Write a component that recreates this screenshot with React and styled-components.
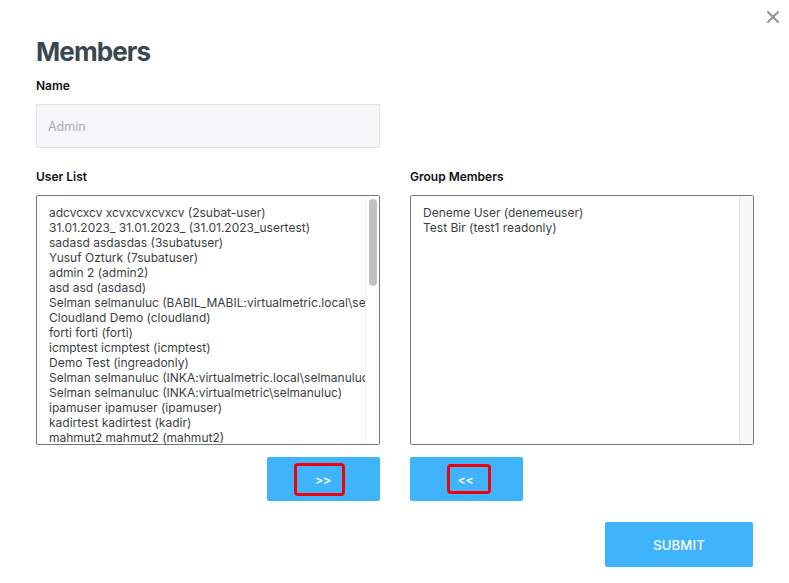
import React from 'react';
import styled, { createGlobalStyle } from 'styled-components';

const GlobalStyle = createGlobalStyle`
  html, body {
    margin: 0;
    padding: 0;
    background: #fff;
    font-family: Inter, "Noto Sans", sans-serif;
  }
`;

const Modal = styled.div`
  position: relative;
  width: 789px;
  height: 583px;
  box-sizing: border-box;
  padding: 35px 36px 0 36px;
  background: #fff;
`;

const CloseButton = styled.button`
  position: absolute;
  top: 10px;
  right: 9px;
  width: 14px;
  height: 14px;
  padding: 0;
  border: none;
  background: none;
  cursor: pointer;
  display: flex;
`;

const Title = styled.h1`
  margin: 0;
  font-size: 26px;
  font-weight: 700;
  letter-spacing: -0.9px;
  color: #3a4750;
  line-height: 34px;
`;

const Label = styled.label`
  display: block;
  font-size: 12px;
  font-weight: 600;
  color: #111;
  line-height: 15px;
  margin: ${p => p.$top || 0}px 0 11px;
`;

const NameInput = styled.input`
  width: 344px;
  height: 44px;
  box-sizing: border-box;
  border: 1px solid #dfe3e7;
  border-radius: 2px;
  background: #f5f7f9;
  padding: 0 11px;
  font-family: inherit;
  font-size: 12.5px;
  color: #aaa;
  outline: none;
  &::placeholder {
    color: #a9adb1;
  }
`;

const Columns = styled.div`
  display: grid;
  grid-template-columns: 344px 344px;
  column-gap: 30px;
  margin-top: 21px;
`;

const Column = styled.div`
  display: flex;
  flex-direction: column;
`;

const ListBox = styled.div`
  display: flex;
  height: 250px;
  box-sizing: border-box;
  border: 1px solid #777;
  border-radius: 2px;
  overflow: hidden;
`;

const ListItems = styled.ul`
  flex: 1;
  min-width: 0;
  margin: 0;
  padding: 9px 0 0 12px;
  list-style: none;
`;

const ListItem = styled.li`
  font-size: 12px;
  line-height: 15px;
  color: #3b3f42;
  white-space: nowrap;
  overflow: hidden;
`;

const ScrollTrack = styled.div`
  width: 14px;
  flex: 0 0 14px;
  background: ${p => (p.$empty ? '#f7f7f7' : '#fff')};
  border-left: 1px solid ${p => (p.$empty ? '#e6e6e6' : '#f0f0f0')};
  padding: 3px 0 0 3px;
  box-sizing: border-box;
`;

const ScrollThumb = styled.div`
  width: 8px;
  height: 87px;
  border-radius: 4px;
  background: #c1c1c1;
`;

const ButtonRow = styled.div`
  display: flex;
  justify-content: ${p => p.$align};
  margin-top: 12px;
`;

const MoveButton = styled.button`
  width: 113px;
  height: 44px;
  border: none;
  border-radius: 2px;
  background: #3fb4fd;
  display: flex;
  align-items: center;
  justify-content: center;
  padding: 0;
  cursor: pointer;
  font-family: inherit;
`;

const Highlight = styled.span`
  display: flex;
  align-items: center;
  justify-content: center;
  width: ${p => p.$w}px;
  height: ${p => p.$h}px;
  box-sizing: border-box;
  border: 3px solid #f3000a;
  border-radius: 4px;
  color: #fff;
  font-size: 12px;
  font-weight: 600;
  margin: ${p => p.$offset};
  padding: ${p => p.$pad};
`;

const Footer = styled.div`
  display: flex;
  justify-content: flex-end;
  margin-top: 21px;
`;

const SubmitButton = styled.button`
  width: 148px;
  height: 45px;
  border: none;
  border-radius: 2px;
  background: #3fb4fd;
  color: #fff;
  font-family: inherit;
  font-size: 13px;
  font-weight: 500;
  letter-spacing: 0.2px;
  cursor: pointer;
`;

const users = [
  'adcvcxcv xcvxcvxcvxcv (2subat-user)',
  '31.01.2023_ 31.01.2023_ (31.01.2023_usertest)',
  'sadasd asdasdas (3subatuser)',
  'Yusuf Ozturk (7subatuser)',
  'admin 2 (admin2)',
  'asd asd (asdasd)',
  'Selman selmanuluc (BABIL_MABIL:virtualmetric.local\\selmanuluc)',
  'Cloudland Demo (cloudland)',
  'forti forti (forti)',
  'icmptest icmptest (icmptest)',
  'Demo Test (ingreadonly)',
  'Selman selmanuluc (INKA:virtualmetric.local\\selmanuluc)',
  'Selman selmanuluc (INKA:virtualmetric\\selmanuluc)',
  'ipamuser ipamuser (ipamuser)',
  'kadirtest kadirtest (kadir)',
  'mahmut2 mahmut2 (mahmut2)',
];

const groupMembers = ['Deneme User (denemeuser)', 'Test Bir (test1 readonly)'];

const App = () => (
  <>
    <GlobalStyle />
    <Modal>
      <CloseButton aria-label="Close">
        <svg width="14" height="14" viewBox="0 0 14 14">
          <path d="M2 2 L12 12 M12 2 L2 12" stroke="#8d959c" strokeWidth="2" strokeLinecap="round" />
        </svg>
      </CloseButton>
      <Title>Members</Title>
      <Label $top={9}>Name</Label>
      <NameInput placeholder="Admin" />
      <Columns>
        <Column>
          <Label>User List</Label>
          <ListBox>
            <ListItems>
              {users.map(u => (
                <ListItem key={u}>{u}</ListItem>
              ))}
            </ListItems>
            <ScrollTrack>
              <ScrollThumb />
            </ScrollTrack>
          </ListBox>
          <ButtonRow $align="flex-end">
            <MoveButton>
              <Highlight $w={51} $h={33} $offset="0 0 0 -9px" $pad="0 0 0 8px">&gt;&gt;</Highlight>
            </MoveButton>
          </ButtonRow>
        </Column>
        <Column>
          <Label>Group Members</Label>
          <ListBox>
            <ListItems>
              {groupMembers.map(u => (
                <ListItem key={u}>{u}</ListItem>
              ))}
            </ListItems>
            <ScrollTrack $empty />
          </ListBox>
          <ButtonRow $align="flex-start">
            <MoveButton>
              <Highlight $w={44} $h={30} $offset="0 0 0 4px" $pad="0 6px 0 0">&lt;&lt;</Highlight>
            </MoveButton>
          </ButtonRow>
        </Column>
      </Columns>
      <Footer>
        <SubmitButton>SUBMIT</SubmitButton>
      </Footer>
    </Modal>
  </>
);

export default App;
